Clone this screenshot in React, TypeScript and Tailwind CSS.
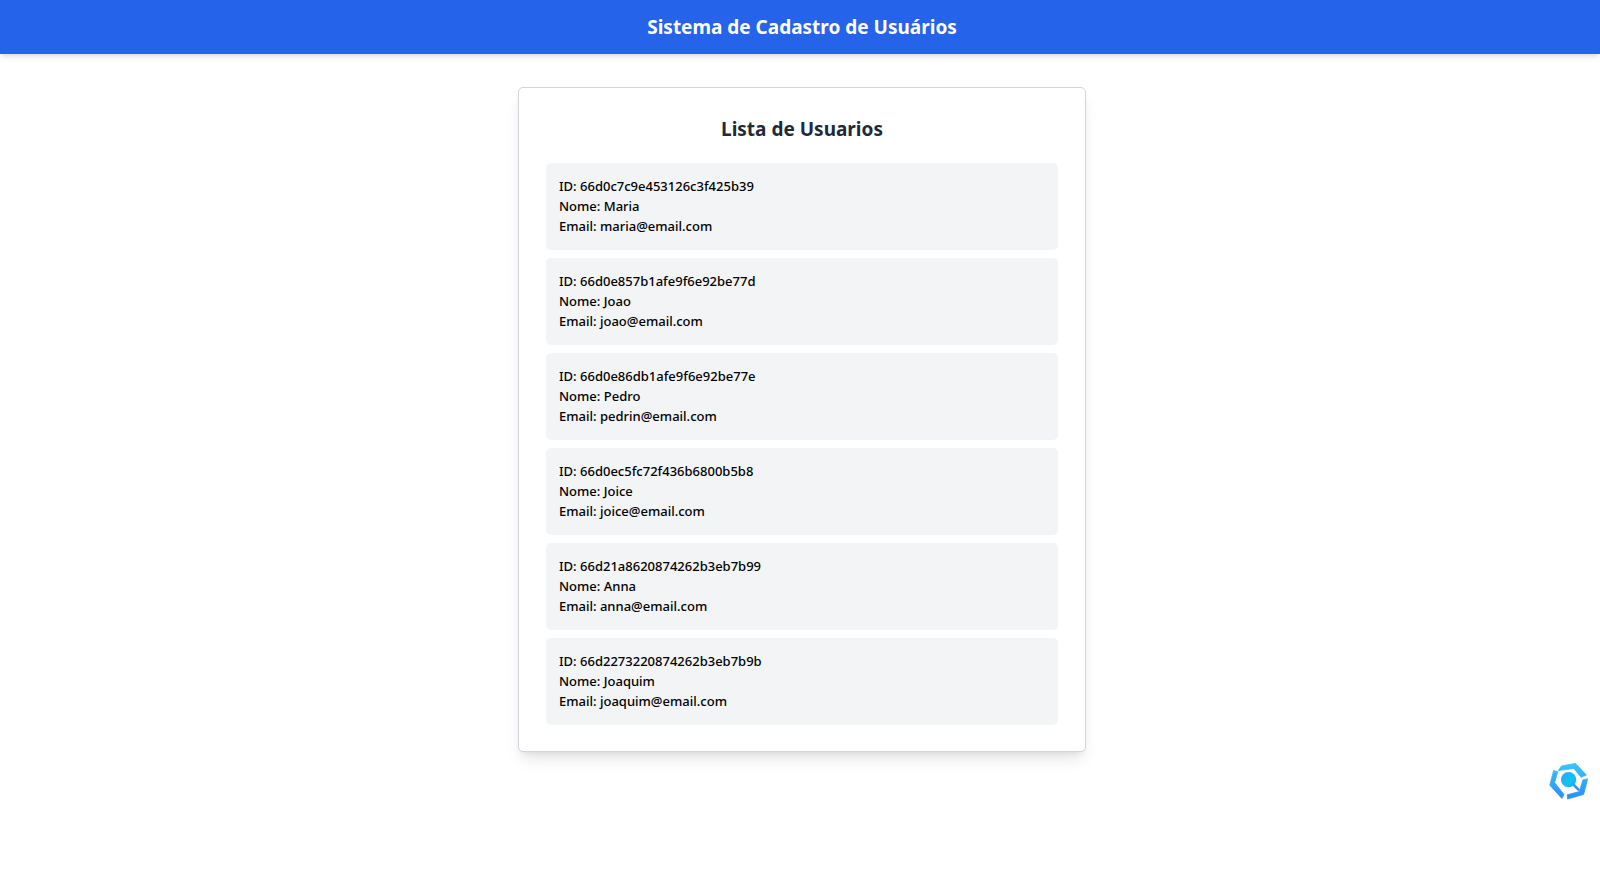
const users = [
  { id: "66d0c7c9e453126c3f425b39", name: "Maria", email: "maria@email.com" },
  { id: "66d0e857b1afe9f6e92be77d", name: "Joao", email: "joao@email.com" },
  { id: "66d0e86db1afe9f6e92be77e", name: "Pedro", email: "pedrin@email.com" },
  { id: "66d0ec5fc72f436b6800b5b8", name: "Joice", email: "joice@email.com" },
  { id: "66d21a8620874262b3eb7b99", name: "Anna", email: "anna@email.com" },
  { id: "66d2273220874262b3eb7b9b", name: "Joaquim", email: "joaquim@email.com" },
];

function SearchBadge() {
  return (
    <button type="button" aria-label="Pesquisar" className="fixed right-[11px] bottom-[82px] cursor-pointer">
      <svg viewBox="0 0 40 38" className="block h-[38px] w-10" aria-hidden="true">
        <defs>
          <linearGradient id="ring" x1="0" y1="0" x2="0" y2="38" gradientUnits="userSpaceOnUse">
            <stop offset="0" stopColor="#38c8f6" />
            <stop offset="1" stopColor="#2b8cfa" />
          </linearGradient>
          <linearGradient id="lens" x1="0" y1="0" x2="1" y2="1">
            <stop offset="0" stopColor="#2ba4f2" />
            <stop offset="0.6" stopColor="#10c4f2" />
            <stop offset="1" stopColor="#1ba6ee" />
          </linearGradient>
        </defs>
        <g fill="url(#ring)" stroke="url(#ring)" strokeWidth="0.8" strokeLinejoin="round">
          <path d="M9.4 8.6 12.4 4 26.5 1.4 37.4 13 32 15.2 24.8 6.4Z" />
          <path d="M4.6 8.4 8.8 9.8 5.6 20.6 15 32.6 12.8 36.4 0.8 23.2Z" />
          <path d="M33.8 18 38.8 16.8 34.6 32.4 18.6 37 18.2 32.8 30.4 29.6Z" />
        </g>
        <path d="m24.5 22.6 5 5" stroke="#3b8fee" strokeWidth="2.6" strokeLinecap="round" />
        <circle cx="19.6" cy="17.7" r="7.6" fill="url(#lens)" />
      </svg>
    </button>
  );
}

export default function App() {
  return (
    <div className="min-h-screen bg-white font-['Noto_Sans','Open_Sans',sans-serif] text-black">
      <header className="bg-[#2563eb] py-[13px] pr-4 pl-5 text-center text-white shadow-md">
        <h1 className="text-[19px] leading-7 font-bold">Sistema de Cadastro de Usuários</h1>
      </header>
      <main className="pt-[33px] pr-4 pb-8 pl-5">
        <section className="mx-auto max-w-[568px] rounded-[5px] border border-gray-300 bg-white px-[27px] pt-[27px] pb-[26px] shadow-lg">
          <h2 className="mb-5 text-center text-[19px] leading-7 font-bold text-gray-800">Lista de Usuarios</h2>
          <ul className="flex flex-col gap-2">
            {users.map((user) => (
              <li key={user.id} className="rounded-[5px] bg-gray-100 px-[13px] pt-[13px] pb-3.5 text-[13px] leading-5 font-medium">
                <p>ID: {user.id}</p>
                <p>Nome: {user.name}</p>
                <p>Email: {user.email}</p>
              </li>
            ))}
          </ul>
        </section>
      </main>
      <SearchBadge />
    </div>
  );
}
